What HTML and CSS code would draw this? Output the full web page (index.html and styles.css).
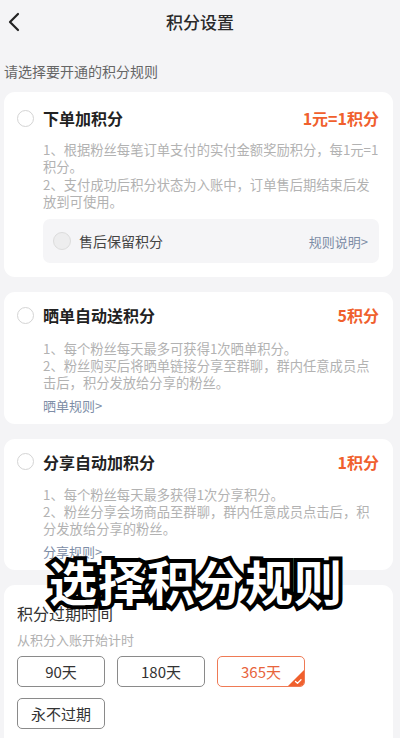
FILE: index.html
```html
<!DOCTYPE html>
<html lang="zh-CN">
<head>
<meta charset="utf-8">
<title>积分设置</title>
<link rel="stylesheet" href="styles.css">
</head>
<body>
<div class="page">
  <header class="nav">
    <svg class="back" width="12" height="20" viewBox="0 0 12 20"><path d="M10 2 L2 10 L10 18" fill="none" stroke="#222" stroke-width="2.2" stroke-linecap="round" stroke-linejoin="round"/></svg>
    <div class="nav-title">积分设置</div>
  </header>
  <p class="hint">请选择要开通的积分规则</p>

  <section class="card card-first">
    <div class="card-head">
      <span class="radio"></span>
      <span class="card-title">下单加积分</span>
      <span class="card-value">1元=1积分</span>
    </div>
    <p class="desc desc-first">1、根据粉丝每笔订单支付的实付金额奖励积分，每1元=1<br>积分。<br>2、支付成功后积分状态为入账中，订单售后期结束后发<br>放到可使用。</p>
    <div class="sub-box">
      <span class="radio radio-sub"></span>
      <span class="sub-label">售后保留积分</span>
      <span class="link">规则说明&gt;</span>
    </div>
  </section>

  <section class="card">
    <div class="card-head">
      <span class="radio"></span>
      <span class="card-title">晒单自动送积分</span>
      <span class="card-value">5积分</span>
    </div>
    <p class="desc">1、每个粉丝每天最多可获得1次晒单积分。<br>2、粉丝购买后将晒单链接分享至群聊，群内任意成员点<br>击后，积分发放给分享的粉丝。</p>
    <div class="link rule-link">晒单规则&gt;</div>
  </section>

  <section class="card">
    <div class="card-head">
      <span class="radio"></span>
      <span class="card-title">分享自动加积分</span>
      <span class="card-value">1积分</span>
    </div>
    <p class="desc">1、每个粉丝每天最多获得1次分享积分。<br>2、粉丝分享会场商品至群聊，群内任意成员点击后，积<br>分发放给分享的粉丝。</p>
    <div class="link rule-link">分享规则&gt;</div>
  </section>

  <section class="card expire">
    <div class="expire-title">积分过期时间</div>
    <div class="expire-hint">从积分入账开始计时</div>
    <div class="options">
      <div class="opt">90天</div>
      <div class="opt">180天</div>
      <div class="opt opt-on">365天
        <svg class="corner" width="16" height="16" viewBox="0 0 16 16"><path d="M16 0 L16 16 L0 16 Z" fill="#f0602d"/><path d="M7.5 11.5 L9.5 13.3 L13 9.8" fill="none" stroke="#fff" stroke-width="1.3" stroke-linecap="round" stroke-linejoin="round"/></svg>
      </div>
      <div class="opt">永不过期</div>
    </div>
  </section>

  <div class="caption">选择积分规则</div>
</div>
</body>
</html>
```

FILE: styles.css
```css
* { box-sizing: border-box; }
html, body {
  margin: 0;
  padding: 0;
  background: #f4f4f6;
}
body {
  font-family: "Noto Sans CJK SC", "Noto Sans", sans-serif;
  color: #222;
  width: 400px;
  height: 738px;
  overflow: hidden;
}
.page {
  position: relative;
  width: 400px;
  min-height: 738px;
}
.nav {
  position: relative;
  height: 44px;
  display: flex;
  align-items: center;
  justify-content: center;
}
.back {
  position: absolute;
  left: 8px;
  top: 12px;
}
.nav-title {
  font-size: 17px;
  line-height: 44px;
  color: #2a2a2a;
  font-weight: 500;
}
.hint {
  margin: 0 0 11px;
  padding: 17px 4px 0;
  font-size: 14px;
  line-height: 20px;
  color: #666;
}
.card {
  background: #fff;
  border-radius: 11px;
  margin: 0 7px 15px 4px;
  padding: 12px 14px 10px 13px;
}
.card-first {
  padding-top: 15px;
  padding-bottom: 14px;
}
.card-head {
  display: flex;
  align-items: center;
  height: 22px;
}
.radio {
  width: 17px;
  height: 17px;
  border-radius: 50%;
  border: 1px solid #d4d4d4;
  background: #fff;
  flex: none;
}
.card-title {
  margin-left: 9px;
  font-size: 16px;
  line-height: 22px;
  font-weight: 600;
  color: #222;
  flex: 1;
}
.card-value {
  font-size: 16px;
  line-height: 22px;
  font-weight: 600;
  color: #f0602d;
}
.desc {
  margin: 13.5px 0 0 26px;
  font-size: 13.3px;
  line-height: 17px;
  color: #b2b2b2;
  white-space: nowrap;
}
.desc-first {
  margin-top: 12px;
  line-height: 17.3px;
}
.sub-box {
  margin: 9px 0 0 26px;
  height: 44px;
  background: #f5f5f7;
  border-radius: 7px;
  display: flex;
  align-items: center;
  padding: 0 11px 0 10px;
}
.radio-sub {
  width: 18px;
  height: 18px;
  background: #ededee;
  border-color: #dcdcdc;
}
.sub-label {
  margin-left: 8px;
  font-size: 14px;
  color: #444;
  flex: 1;
}
.link {
  font-size: 13px;
  line-height: 17px;
  color: #7d8da6;
}
.rule-link {
  margin: 6px 0 0 26px;
}
.expire {
  padding: 17px 14px 30px 13px;
  margin-bottom: 0;
}
.expire-title {
  font-size: 16px;
  line-height: 22px;
  color: #333;
}
.expire-hint {
  margin-top: 8px;
  font-size: 13px;
  line-height: 16px;
  color: #b0b0b0;
}
.options {
  margin-top: 8px;
  display: grid;
  grid-template-columns: 88px 88px 88px;
  column-gap: 12px;
  row-gap: 11px;
}
.opt {
  position: relative;
  height: 31px;
  border: 1px solid #8a8a8a;
  border-radius: 5px;
  display: flex;
  align-items: center;
  justify-content: center;
  font-size: 15px;
  color: #333;
  overflow: hidden;
}
.opt-on {
  border-color: #ef7a55;
  color: #e8643c;
}
.corner {
  position: absolute;
  right: 0;
  bottom: 0;
}
.caption {
  position: absolute;
  left: 0;
  right: 8px;
  top: 556px;
  text-align: center;
  font-size: 48px;
  line-height: 48px;
  font-weight: 700;
  color: #fff;
  -webkit-text-stroke: 8px #000;
  paint-order: stroke fill;
  letter-spacing: 1px;
}
```
